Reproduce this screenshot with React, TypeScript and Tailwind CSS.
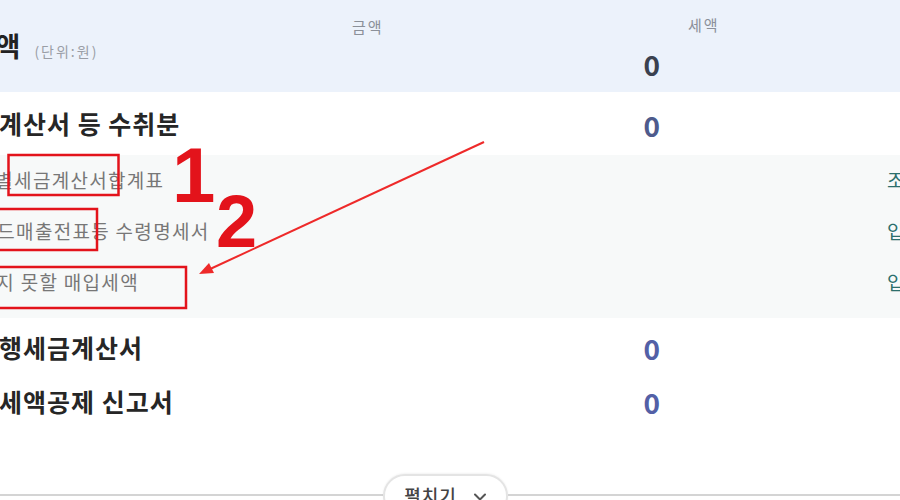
import React from "react";

function Chevron() {
  return (
    <svg width="14" height="10" viewBox="0 0 14 10" fill="none">
      <path d="M2 2.5 L7 7.5 L12 2.5" stroke="#555" strokeWidth="2" strokeLinecap="round" strokeLinejoin="round" />
    </svg>
  );
}

export default function App() {
  return (
    <div className="relative h-[500px] w-[900px] overflow-hidden bg-white font-['Noto_Sans_CJK_KR','Noto_Sans',sans-serif]">
      {/* header */}
      <div className="flex h-[92px] items-stretch bg-[#ecf2fb]">
        <div className="flex w-[340px] shrink-0 items-center">
          <div className="flex items-baseline whitespace-nowrap">
            <span className="-ml-[82px] text-[27px] font-bold tracking-[1px] text-[#222]">매입세액</span>
            <span className="ml-[13px] text-[14px] tracking-[2px] text-[#9a9ea6]">(단위:원)</span>
          </div>
        </div>
        <div className="flex flex-col pt-[16px]">
          <div className="flex h-[22px] items-center whitespace-nowrap text-[15px] tracking-[2px] text-[#8b9099]">
            <span className="ml-[12px] w-[36px] shrink-0">금액</span>
            <span className="ml-[300px] -mt-[3px]">세액</span>
          </div>
          <div className="mt-[8px] flex">
            <span className="w-[320px] text-right text-[28px] font-bold leading-[36px] text-[#3a4150]">0</span>
          </div>
        </div>
      </div>

      {/* row 1 */}
      <div className="flex h-[63px] items-center">
        <div className="w-[600px] shrink-0 whitespace-nowrap">
          <div className="-ml-[49px] text-[25px] font-bold tracking-[1px] text-[#262626]">세금계산서 등 수취분</div>
        </div>
        <span className="mt-[2px] w-[60px] text-right text-[28px] font-bold text-[#4e5b8c]">0</span>
      </div>

      {/* gray section */}
      <div className="bg-[#f7f9f9] pb-[10px]">
        <div className="flex h-[51px] items-center whitespace-nowrap">
          <div className="w-[887px] shrink-0">
            <div className="-ml-[61px] text-[19px] tracking-[1.3px] text-[#777]">매입처별세금계산서합계표</div>
          </div>
          <span className="shrink-0 text-[19px] text-[#2b6f6c]">조회</span>
        </div>
        <div className="flex h-[51px] items-center whitespace-nowrap">
          <div className="w-[887px] shrink-0">
            <div className="-ml-[59px] text-[19px] tracking-[1.3px] text-[#777]">신용카드매출전표등 수령명세서</div>
          </div>
          <span className="shrink-0 text-[19px] text-[#2b6f6c]">입력</span>
        </div>
        <div className="flex h-[51px] items-center whitespace-nowrap">
          <div className="w-[887px] shrink-0">
            <div className="-ml-[60px] text-[19px] tracking-[1.3px] text-[#777]">공제받지 못할 매입세액</div>
          </div>
          <span className="shrink-0 text-[19px] text-[#2b6f6c]">입력</span>
        </div>
      </div>

      {/* white rows */}
      <div className="pt-[3px]">
        <div className="flex h-[54px] items-center">
          <div className="w-[600px] shrink-0 whitespace-nowrap">
            <div className="-ml-[97px] text-[25px] font-bold tracking-[1px] text-[#262626]">매입자발행세금계산서</div>
          </div>
          <span className="w-[60px] text-right text-[28px] font-bold text-[#5360a6]">0</span>
        </div>
        <div className="flex h-[54px] items-center">
          <div className="w-[600px] shrink-0 whitespace-nowrap">
            <div className="-ml-[97px] text-[25px] font-bold tracking-[1px] text-[#262626]">의제매입세액공제 신고서</div>
          </div>
          <span className="w-[60px] text-right text-[28px] font-bold text-[#5360a6]">0</span>
        </div>
      </div>

      {/* bottom expand */}
      <div className="flex h-[71px] items-start">
        <div className="mt-[65px] h-[2px] w-[383px] shrink-0 bg-[#d4d4d4]" />
        <div className="mt-[45px] flex h-[44px] w-[125px] shrink-0 items-start justify-center gap-[16px] rounded-[22px] border-2 border-[#e4e4e4] bg-white pt-[6px] shadow-[0_-1px_2px_rgba(0,0,0,0.05)]">
          <span className="text-[18px] font-medium tracking-[1px] text-[#444]">펼치기</span>
          <span className="mt-[10px]"><Chevron /></span>
        </div>
        <div className="mt-[65px] h-[2px] flex-1 bg-[#d4d4d4]" />
      </div>

      {/* annotations */}
      <svg className="pointer-events-none absolute left-0 top-0" width="900" height="500" viewBox="0 0 900 500">
        <rect x="8.5" y="155" width="110" height="40" fill="none" stroke="#e3131b" strokeWidth="2.5" />
        <rect x="-5" y="209" width="102" height="41" fill="none" stroke="#e3131b" strokeWidth="2.5" />
        <rect x="-5" y="267" width="191" height="41" fill="none" stroke="#e3131b" strokeWidth="2.5" />
        <line x1="484" y1="142" x2="208" y2="270" stroke="#ee2a2a" strokeWidth="2" />
        <polygon points="199,274 214,273 209,263" fill="#ee2a2a" />
      </svg>
      <div className="pointer-events-none absolute left-[172px] top-[136px] font-['Liberation_Sans',Arial,sans-serif] text-[78px] font-bold leading-none text-[#e3131b]">1</div>
      <div className="pointer-events-none absolute left-[216px] top-[185px] font-['Liberation_Sans',Arial,sans-serif] text-[74px] font-bold leading-none text-[#e3131b]">2</div>
    </div>
  );
}
